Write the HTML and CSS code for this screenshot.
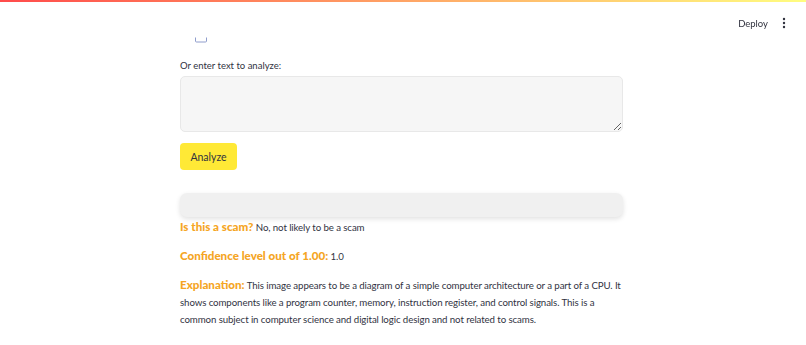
FILE: index.html
```html
<!DOCTYPE html>
<html lang="en">
<head>
    <meta charset="UTF-8">
    <meta name="viewport" content="width=device-width, initial-scale=1.0">
    <title>Scam Detector</title>
    <link rel="stylesheet" href="styles.css">
</head>
<body>

    <div class="decoration"></div>

    <header class="topbar">
        <button class="deploy">Deploy</button>
        <button class="menu" aria-label="Main menu">
            <svg width="4" height="12" viewBox="0 0 4 12">
                <circle cx="2" cy="2" r="1.2" fill="#31333f"/>
                <circle cx="2" cy="6" r="1.2" fill="#31333f"/>
                <circle cx="2" cy="10" r="1.2" fill="#31333f"/>
            </svg>
        </button>
    </header>

    <main class="main">
        <svg class="upload-edge" width="14" height="6" viewBox="0 0 14 6">
            <path d="M1.5 0.5 V4 Q1.5 5 2.5 5 H11.5 Q12.5 5 12.5 4 V0.5" fill="none" stroke="#8f9dcc" stroke-width="1"/>
        </svg>

        <label class="field-label" for="textInput">Or enter text to analyze:</label>
        <textarea id="textInput" class="text-input"></textarea>

        <button class="analyze">Analyze</button>

        <div class="result-bar"></div>

        <p class="result-line first"><span class="key">Is this a scam?</span> No, not likely to be a scam</p>
        <p class="result-line"><span class="key">Confidence level out of 1.00:</span> 1.0</p>
        <p class="result-line"><span class="key">Explanation:</span> This image appears to be a diagram of a simple computer architecture or a part of a CPU. It shows components like a program counter, memory, instruction register, and control signals. This is a common subject in computer science and digital logic design and not related to scams.</p>
    </main>

</body>
</html>
```

FILE: styles.css
```css
body {
    font-family: Lato, "Open Sans", sans-serif;
    margin: 0;
    padding: 0;
    background-color: #ffffff;
    color: #31333f;
}

.decoration {
    height: 2px;
    background: linear-gradient(90deg, #ff4b4b, #fffd80);
}

.topbar {
    position: fixed;
    top: 2px;
    right: 0;
    height: 42px;
    display: flex;
    align-items: center;
    gap: 14px;
    padding-right: 20px;
}

.topbar button {
    border: none;
    background: none;
    padding: 0;
    cursor: pointer;
    font-family: inherit;
    color: #31333f;
}

.deploy {
    font-size: 9.5px;
}

.menu {
    display: flex;
    align-items: center;
}

.main {
    width: 443px;
    margin-left: 180px;
}

.upload-edge {
    display: block;
    margin: 35px 0 0 14px;
}

.field-label {
    display: block;
    margin-top: 16px;
    font-size: 9.5px;
    line-height: 14px;
}

.text-input {
    display: block;
    box-sizing: border-box;
    width: 443px;
    height: 56px;
    margin-top: 3px;
    background-color: #f6f6f6;
    border: 1px solid #e8e8e8;
    border-radius: 5px;
    font-family: inherit;
    outline: none;
}

.analyze {
    display: block;
    margin-top: 11px;
    width: 57px;
    height: 27px;
    border: none;
    border-radius: 4px;
    background-color: #ffe936;
    color: #31333f;
    font-family: inherit;
    font-size: 10.5px;
    cursor: pointer;
}

.result-bar {
    margin-top: 23px;
    height: 24px;
    background-color: #f0f0f0;
    border-radius: 7px;
    box-shadow: 0 2px 5px rgba(0, 0, 0, 0.12);
}

.result-line {
    margin: 11px 0 0;
    font-size: 9.7px;
    line-height: 17px;
    letter-spacing: -0.1px;
}

.result-line.first {
    margin-top: 1px;
}

.key {
    color: #f5a524;
    font-weight: 900;
    font-size: 11.6px;
    letter-spacing: 0;
}
```
